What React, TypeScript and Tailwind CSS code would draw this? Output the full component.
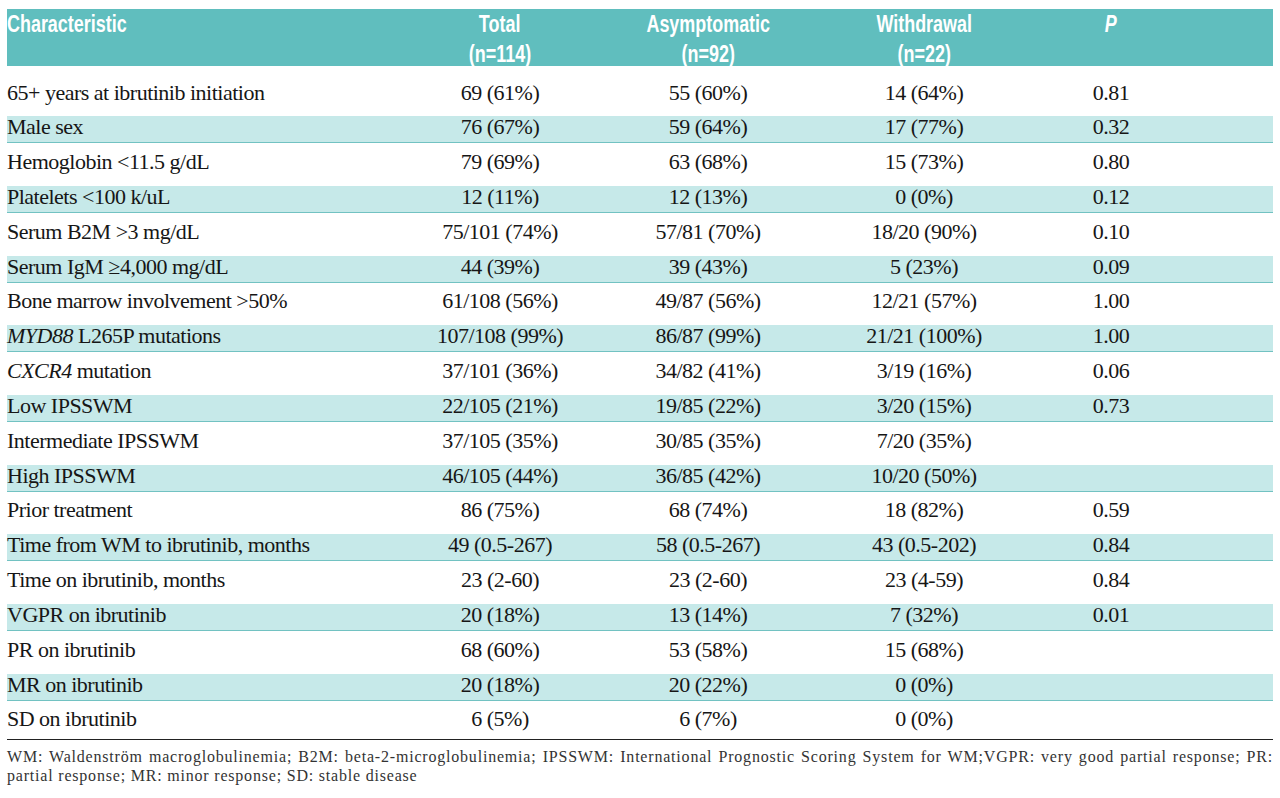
import React from 'react';

type Row = {
  label: React.ReactNode;
  total: string;
  asym: string;
  withdrawal: string;
  p?: string;
};

const rows: Row[] = [
  { label: '65+ years at ibrutinib initiation', total: '69 (61%)', asym: '55 (60%)', withdrawal: '14 (64%)', p: '0.81' },
  { label: 'Male sex', total: '76 (67%)', asym: '59 (64%)', withdrawal: '17 (77%)', p: '0.32' },
  { label: 'Hemoglobin <11.5 g/dL', total: '79 (69%)', asym: '63 (68%)', withdrawal: '15 (73%)', p: '0.80' },
  { label: 'Platelets <100 k/uL', total: '12 (11%)', asym: '12 (13%)', withdrawal: '0 (0%)', p: '0.12' },
  { label: 'Serum B2M >3 mg/dL', total: '75/101 (74%)', asym: '57/81 (70%)', withdrawal: '18/20 (90%)', p: '0.10' },
  { label: 'Serum IgM ≥4,000 mg/dL', total: '44 (39%)', asym: '39 (43%)', withdrawal: '5 (23%)', p: '0.09' },
  { label: 'Bone marrow involvement >50%', total: '61/108 (56%)', asym: '49/87 (56%)', withdrawal: '12/21 (57%)', p: '1.00' },
  {
    label: (
      <>
        <i>MYD88</i> L265P mutations
      </>
    ),
    total: '107/108 (99%)',
    asym: '86/87 (99%)',
    withdrawal: '21/21 (100%)',
    p: '1.00',
  },
  {
    label: (
      <>
        <i>CXCR4</i> mutation
      </>
    ),
    total: '37/101 (36%)',
    asym: '34/82 (41%)',
    withdrawal: '3/19 (16%)',
    p: '0.06',
  },
  { label: 'Low IPSSWM', total: '22/105 (21%)', asym: '19/85 (22%)', withdrawal: '3/20 (15%)', p: '0.73' },
  { label: 'Intermediate IPSSWM', total: '37/105 (35%)', asym: '30/85 (35%)', withdrawal: '7/20 (35%)' },
  { label: 'High IPSSWM', total: '46/105 (44%)', asym: '36/85 (42%)', withdrawal: '10/20 (50%)' },
  { label: 'Prior treatment', total: '86 (75%)', asym: '68 (74%)', withdrawal: '18 (82%)', p: '0.59' },
  { label: 'Time from WM to ibrutinib, months', total: '49 (0.5-267)', asym: '58 (0.5-267)', withdrawal: '43 (0.5-202)', p: '0.84' },
  { label: 'Time on ibrutinib, months', total: '23 (2-60)', asym: '23 (2-60)', withdrawal: '23 (4-59)', p: '0.84' },
  { label: 'VGPR on ibrutinib', total: '20 (18%)', asym: '13 (14%)', withdrawal: '7 (32%)', p: '0.01' },
  { label: 'PR on ibrutinib', total: '68 (60%)', asym: '53 (58%)', withdrawal: '15 (68%)' },
  { label: 'MR on ibrutinib', total: '20 (18%)', asym: '20 (22%)', withdrawal: '0 (0%)' },
  { label: 'SD on ibrutinib', total: '6 (5%)', asym: '6 (7%)', withdrawal: '0 (0%)' },
];

const cols = 'grid grid-cols-[388px_210px_206px_226px_148px_1fr]';

function HeadCell({ lines, left }: { lines: React.ReactNode[]; left?: boolean }) {
  return (
    <div className={left ? 'flex flex-col items-start' : 'flex flex-col items-center'}>
      {lines.map((l, i) => (
        <span
          key={i}
          className={
            left
              ? 'inline-block whitespace-nowrap origin-left scale-x-[0.78]'
              : 'inline-block whitespace-nowrap origin-center scale-x-[0.78]'
          }
        >
          {l}
        </span>
      ))}
    </div>
  );
}

export default function App() {
  return (
    <div className="w-[1280px] h-[798px] bg-white pt-[9px] px-[7px] overflow-hidden">
      <div className="w-[1266px]">
        {/* header */}
        <div
          className={`${cols} h-[57px] bg-[#60bebe] text-white font-bold text-[23px] leading-[30px]`}
          style={{ fontFamily: '"Liberation Sans", Arial, sans-serif' }}
        >
          <HeadCell left lines={['Characteristic']} />
          <HeadCell lines={['Total', '(n=114)']} />
          <HeadCell lines={['Asymptomatic', '(n=92)']} />
          <HeadCell lines={['Withdrawal', '(n=22)']} />
          <HeadCell lines={[<i key="p">P</i>]} />
          <div />
        </div>

        {/* body */}
        <div
          className="pt-[11.6px] text-[22px] leading-[22px] text-[#161616] tracking-[-0.5px]"
          style={{ fontFamily: '"Liberation Serif", "Times New Roman", serif' }}
        >
          {rows.map((r, i) => (
            <div key={i} className="h-[34.83px] flex items-center">
              <div
                className={
                  i % 2 === 1
                    ? `${cols} w-full h-[27px] pb-[5px] items-center bg-[#c6e9e9] border-b border-[#72c2c2]`
                    : `${cols} w-full h-[27px] pb-[5px] items-center`
                }
              >
                <div className="whitespace-nowrap">{r.label}</div>
                <div className="text-center whitespace-nowrap">{r.total}</div>
                <div className="text-center whitespace-nowrap">{r.asym}</div>
                <div className="text-center whitespace-nowrap">{r.withdrawal}</div>
                <div className="text-center whitespace-nowrap">{r.p ?? ''}</div>
                <div />
              </div>
            </div>
          ))}
        </div>
        <div className="border-t border-[#222]" />

        {/* footnote */}
        <p
          className="pt-[7px] text-[16px] leading-[19px] text-[#333] tracking-[0.8px]"
          style={{ fontFamily: '"Liberation Serif", "Times New Roman", serif' }}
        >
          <span className="block whitespace-nowrap text-justify [text-align-last:justify]">
            WM: Waldenström macroglobulinemia; B2M: beta-2-microglobulinemia; IPSSWM: International Prognostic Scoring
            System for WM;VGPR: very good partial response; PR:
          </span>
          <span className="block">partial response; MR: minor response; SD: stable disease</span>
        </p>
      </div>
    </div>
  );
}
